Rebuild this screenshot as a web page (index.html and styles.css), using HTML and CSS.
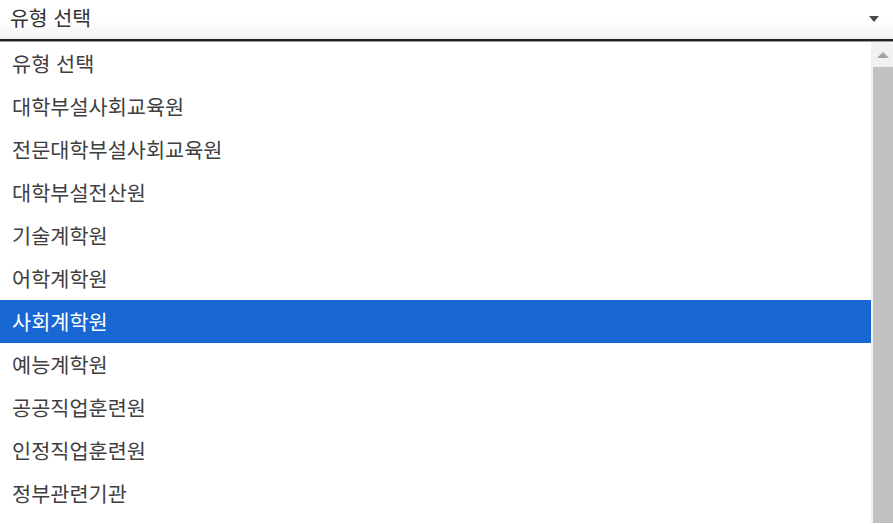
FILE: index.html
```html
<!DOCTYPE html>
<html lang="ko">
<head>
<meta charset="utf-8">
<link rel="stylesheet" href="styles.css">
</head>
<body>
<div class="select">
  <span class="select-label">유형 선택</span>
  <span class="caret"></span>
</div>
<div class="divider"></div>
<div class="dropdown">
  <ul class="options">
    <li class="option">유형 선택</li>
    <li class="option">대학부설사회교육원</li>
    <li class="option">전문대학부설사회교육원</li>
    <li class="option">대학부설전산원</li>
    <li class="option">기술계학원</li>
    <li class="option">어학계학원</li>
    <li class="option selected">사회계학원</li>
    <li class="option">예능계학원</li>
    <li class="option">공공직업훈련원</li>
    <li class="option">인정직업훈련원</li>
    <li class="option">정부관련기관</li>
  </ul>
  <div class="scrollbar">
    <div class="scroll-btn"><span class="up"></span></div>
    <div class="thumb"></div>
  </div>
</div>
</body>
</html>
```
FILE: styles.css
```css
html, body {
  margin: 0;
  padding: 0;
  width: 893px;
  height: 524px;
  overflow: hidden;
  background: #fff;
  font-family: "Noto Sans CJK KR", "Noto Sans", sans-serif;
  color: #3f3f3f;
}
.select {
  height: 39px;
  box-sizing: border-box;
  display: flex;
  align-items: center;
  justify-content: space-between;
  padding: 0 14px 5px 10px;
  background: linear-gradient(#ffffff 0%, #ffffff 55%, #f1f1f1 100%);
  font-size: 20.5px;
  color: #333;
}
.caret {
  width: 0;
  height: 0;
  border-left: 5px solid transparent;
  border-right: 5px solid transparent;
  border-top: 6px solid #4a4a4a;
  margin-top: 4px;
}
.divider {
  height: 2px;
  background: #202020;
  border-bottom: 1px solid #9a9a9a;
}
.dropdown {
  display: flex;
  height: 481px;
  border-radius: 5px 5px 0 0;
  overflow: hidden;
  background: #fff;
}
.options {
  list-style: none;
  margin: 0;
  padding: 0;
  width: 871px;
  flex: none;
}
.option {
  height: 43px;
  line-height: 43px;
  padding-left: 12px;
  font-size: 20.8px;
  white-space: nowrap;
}
.option.selected {
  background: #1967d2;
  color: #fff;
}
.scrollbar {
  flex: 1;
  display: flex;
  flex-direction: column;
  background: #f1f1f1;
  padding-left: 2px;
}
.scroll-btn {
  height: 25px;
  display: flex;
  align-items: center;
  justify-content: center;
}
.up {
  width: 0;
  height: 0;
  border-left: 6px solid transparent;
  border-right: 6px solid transparent;
  border-bottom: 6px solid #a3a3a3;
}
.thumb {
  flex: 1;
  background: #c1c1c1;
}
```
